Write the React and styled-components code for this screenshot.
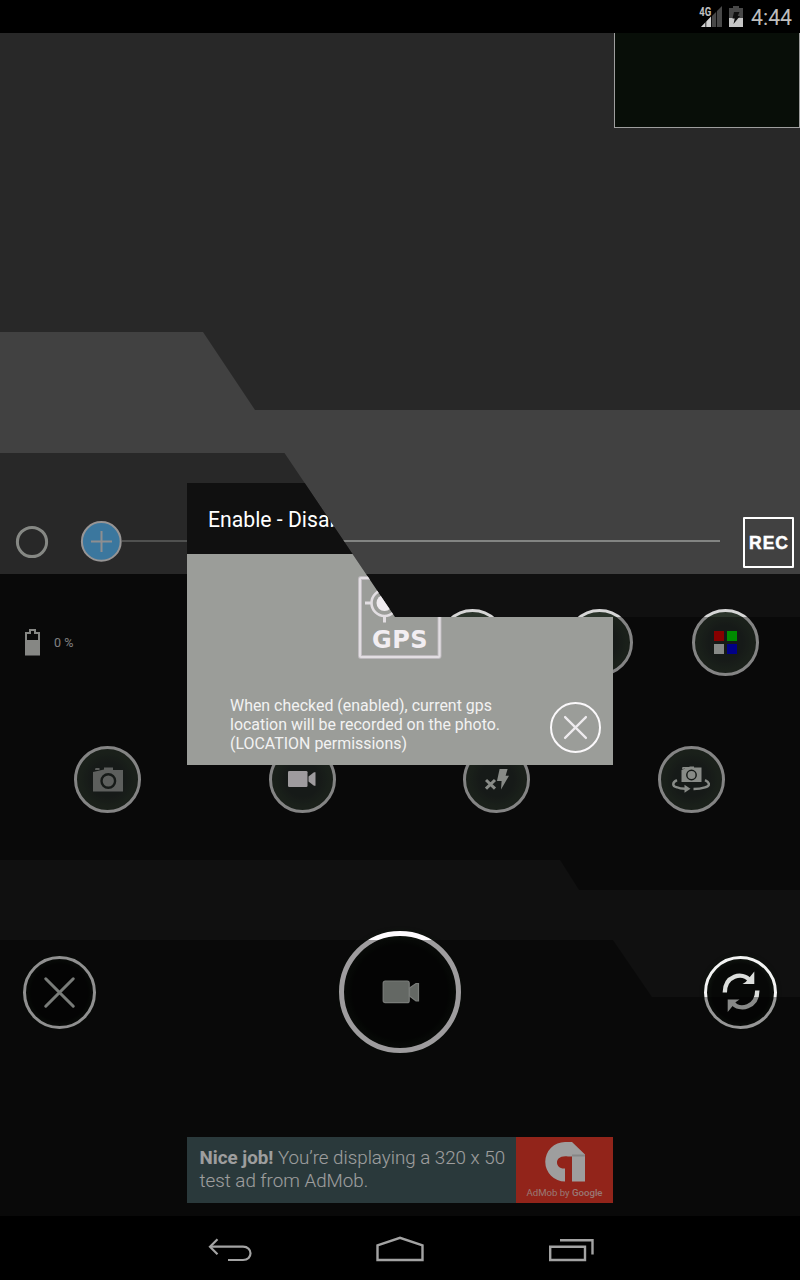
import React from 'react';
import styled, { createGlobalStyle } from 'styled-components';

const GlobalStyle = createGlobalStyle`
  * { box-sizing: border-box; }
  body { margin: 0; background: #000; font-family: Roboto, "Liberation Sans", sans-serif; }
  svg { display: block; flex: none; }
`;

const Screen = styled.div`
  position: relative;
  display: flex;
  flex-direction: column;
  width: 800px;
  height: 1280px;
  overflow: hidden;
  background: #000;
`;

const StatusBar = styled.header`
  display: flex;
  justify-content: flex-end;
  align-items: center;
  height: 33px;
  padding-right: 7px;
  background: #000;
`;

const StatusIcons = styled.div`
  display: flex;
  gap: 7px;
  margin-bottom: 1px;
`;

const Clock = styled.span`
  margin: 2px 0 0 8px;
  width: 42px;
  font-size: 21.3px;
  line-height: 25px;
  color: #bebebe;
  white-space: nowrap;
`;

const Viewfinder = styled.section`
  display: flex;
  flex-direction: column;
  justify-content: space-between;
  height: 541px;
  background: #414141;
`;

const Thumbnail = styled.div`
  align-self: flex-end;
  width: 186px;
  height: 95px;
  border: 1px solid #fff;
  border-top: 0;
  background: #0e180d;
`;

const ZoomRow = styled.div`
  display: flex;
  align-items: center;
  height: 65px;
  padding: 0 6px 0 15px;
`;

const ThumbSlot = styled.div`
  margin: 0 0 0 31px;
`;

const Track = styled.div`
  flex: 1;
  height: 2px;
  margin: 0 23px 1px 0;
  background: #828482;
`;

const RecBadge = styled.div`
  display: flex;
  align-items: center;
  justify-content: center;
  width: 51px;
  height: 51px;
  margin-top: 1px;
  padding-top: 2px;
  border: 2.5px solid #fff;
  border-radius: 1px;
  font: bold 17.5px "Liberation Sans", sans-serif;
  letter-spacing: 1px;
  text-indent: 1px;
  color: #fff;
  -webkit-text-stroke: 0.5px #fff;
`;

const Panel = styled.section`
  height: 642px;
  background: #101010;
`;

const Row = styled.div`
  display: flex;
  align-items: center;
  height: ${(p) => p.$height}px;
  padding: ${(p) => p.$padding};
  gap: ${(p) => p.$gap || 0}px;
  justify-content: ${(p) => (p.$spread ? 'space-between' : 'flex-start')};
`;

const BatteryStatus = styled.div`
  flex: 1;
  display: flex;
  align-items: center;
`;

const BatteryLabel = styled.span`
  margin-left: 14px;
  font-size: 12.5px;
  color: #cfcfcf;
`;

const RoundButton = styled.div`
  display: flex;
  align-items: center;
  justify-content: center;
  flex: none;
  width: 67px;
  height: 67px;
  border: 3px solid #d6d6d6;
  border-radius: 50%;
  background: radial-gradient(circle, #252b28 0 40%, #2a342a 62%);
`;

const DarkButton = styled(RoundButton)`
  width: ${(p) => p.$size}px;
  height: ${(p) => p.$size}px;
  border: ${(p) => p.$stroke}px solid ${(p) => p.$color || '#f4f4f4'};
  background: radial-gradient(circle, #070807 0 60%, #0d110d 70%);
  box-shadow: 0 0 4px #0d160d;
`;

const Ad = styled.div`
  display: flex;
  width: 426px;
  height: 66px;
  margin: 0 auto;
  background: #445d5f;
`;

const AdText = styled.p`
  flex: 1;
  margin: 0;
  padding: 10px 0 0 12.5px;
  font-size: 18.75px;
  font-weight: 300;
  line-height: 22.5px;
  color: #fff;
  white-space: nowrap;
  b { font-weight: 700; }
`;

const AdLogo = styled.div`
  display: flex;
  flex: none;
  flex-direction: column;
  align-items: center;
  width: 97px;
  padding-top: 5px;
  background: #ec3a2b;
  font-size: 9.6px;
  line-height: 12px;
  color: #f6c2bc;
  span { margin-top: 5px; white-space: nowrap; }
  b { font-weight: 500; }
`;

const NavBar = styled.nav`
  display: flex;
  align-items: center;
  justify-content: space-between;
  height: 64px;
  padding: 3px 204px 0 206px;
  background: #000;
`;

const Overlay = styled.div`
  position: absolute;
  top: 33px;
  left: 0;
  width: 800px;
  height: 1183px;
  padding-top: 450px;
  background: rgba(0, 0, 0, 0.38);
  clip-path: path(evenodd, "M0 0H800V1183H0Z M0 299H203L255 377H800V584H395L284.5 420H0Z M0 827H560L579 857H800V964H652L613 907H0Z");
`;

const Dialog = styled.div`
  width: 426px;
  height: 282px;
  margin: 0 auto;
`;

const DialogTitle = styled.h1`
  height: 71px;
  margin: 0;
  padding-left: 21px;
  background: #101010;
  font-size: 21.2px;
  font-weight: 400;
  line-height: 73px;
  color: #fff;
`;

const DialogBody = styled.div`
  display: flex;
  flex-direction: column;
  align-items: center;
  justify-content: space-between;
  height: 211px;
  padding: 22px 12px 12px 43px;
  background: #9b9d99;
`;

const GpsSlot = styled.div`
  width: 84px;
  margin-right: 32px;
`;

const DialogFooter = styled.div`
  display: flex;
  align-items: flex-end;
  justify-content: space-between;
  width: 100%;
`;

const Message = styled.p`
  margin: 0;
  font-size: 15.95px;
  line-height: 19px;
  color: #f2f2f2;
  white-space: nowrap;
`;

const CloseCircle = styled.div`
  display: flex;
  align-items: center;
  justify-content: center;
  width: 51px;
  height: 51px;
  border: 2.5px solid #fbf9fb;
  border-radius: 50%;
`;

const Cross = ({ size, color, width }) => (
  <svg width={size} height={size} viewBox="0 0 24 24" stroke={color} strokeWidth={width} strokeLinecap="round">
    <path d="M2 2L22 22M22 2L2 22" />
  </svg>
);

const SignalIcon = () => (
  <svg width="26" height="23" viewBox="-3 -1 26 23">
    <path d="M23 0V21H2Z" fill="#484848" />
    <path d="M12 10.5V21H2Z" fill="#d0d0d0" />
    <path d="M6.8 14V21M12.5 9V21M17.5 4V21" stroke="#000" strokeWidth="0.8" />
    <text x="0.2" y="10.2" fontSize="12" fontWeight="700" fill="#c0c0c0" stroke="#000" strokeWidth="1" paintOrder="stroke" textLength="12" lengthAdjust="spacingAndGlyphs">4G</text>
  </svg>
);

const StatusBattery = () => (
  <svg width="14" height="22" viewBox="0 -1 14 22">
    <path d="M4 0H10V2H14V12H0V2H4Z" fill="#484848" />
    <path d="M0 12H14V21H0Z" fill="#c6c6c6" />
    <path d="M5 6H10.5L8.7 10H11L4.5 18L5.7 12.5H3.5Z" fill="#101010" />
  </svg>
);

const RingIcon = () => (
  <svg width="34" height="34" viewBox="0 0 34 34">
    <circle cx="17" cy="17" r="14.6" fill="none" stroke="#d8dcd6" strokeWidth="3" />
  </svg>
);

const PlusThumb = () => (
  <svg width="42" height="42" viewBox="0 0 42 42">
    <circle cx="21.3" cy="20.4" r="19.4" fill="#5fc1ff" stroke="#f4f0f0" strokeWidth="2" />
    <path d="M11 20.4H32M21.5 10V31" stroke="#e6e6ea" strokeWidth="2" />
  </svg>
);

const BatteryIcon = () => (
  <svg width="15" height="27" viewBox="0 0 15 27">
    <path fillRule="evenodd" d="M4 0H11V3H15V27H0V3H4ZM6 2V5H2V11H13V5H9V2Z" fill="#d8dad6" />
    <path d="M0 26H15V27H0Z" fill="#777" />
  </svg>
);

const SwatchIcon = () => (
  <svg width="23" height="23" viewBox="0 0 23 23">
    <path d="M0 0H10V10H0Z" fill="#da0000" />
    <path d="M13 0H23V10H13Z" fill="#00e000" />
    <path d="M0 13H10V23H0Z" fill="#dadeda" />
    <path d="M13 13H23V23H13Z" fill="#0000da" />
  </svg>
);

const CameraIcon = () => (
  <svg width="30" height="25" viewBox="0 0 30 25">
    <path d="M11 0.5H20V3H30V24.5H0V5L11 2.5Z" fill="#969a96" />
    <path d="M2.5 1H6.5V3H2Z" fill="#969a96" />
    <circle cx="15.3" cy="14" r="6.8" fill="none" stroke="#252b27" strokeWidth="2.4" />
  </svg>
);

const VideoIcon = () => (
  <svg width="28" height="19" viewBox="0 0 28 19">
    <rect x="0" y="1" width="19.5" height="16" rx="1.3" fill="#fffaff" />
    <path d="M20.5 6.5L26 2.2H27.5V15.8H26L20.5 11.5Z" fill="#fffaff" />
  </svg>
);

const FlashOffIcon = () => (
  <svg width="24" height="21" viewBox="0 0 24 21">
    <path d="M14.6 0H22.6L20.6 6.7H24L16 20.5L16.6 12H12Z" fill="#dbe0da" />
    <path d="M1 11L10 19.7M10 11L1 19.7" stroke="#dbe0da" strokeWidth="3" />
  </svg>
);

const SwitchCameraIcon = () => (
  <svg width="38" height="27" viewBox="0 0 38 27">
    <path d="M13 1H17L18 0.5H22V1.5H29.5V16H9.5V4L13 2.5Z" fill="#dbe0da" />
    <path d="M10.5 1H13V2.5L10 3.2Z" fill="#dbe0da" />
    <circle cx="19.5" cy="9" r="4.7" fill="none" stroke="#252b27" strokeWidth="1.5" />
    <path d="M5 14.2C0 16.5 0 20 5 21.3Q8 22.8 13 22.8M33 14.2C38 16.5 38.5 20 33 21.3Q28 23 21.5 23" fill="none" stroke="#dbe0da" strokeWidth="2.4" />
    <path d="M12.5 18.8L18.5 22.8L12.5 26.8Z" fill="#dbe0da" />
  </svg>
);

const RecordIcon = () => (
  <svg width="40" height="26" viewBox="0 0 40 26">
    <rect x="3.2" y="2.2" width="26" height="21.5" rx="2" fill="#a2a8a2" stroke="#c4c8c4" strokeWidth="1.2" />
    <path d="M29.5 9L36 4.5H38.5V22H36L29.5 17Z" fill="#a2a8a2" stroke="#c4c8c4" strokeWidth="1.2" />
  </svg>
);

const SyncIcon = () => (
  <svg width="40" height="42" viewBox="0 0 40 42">
    <g fill="none" stroke="#dcdedc" strokeWidth="4.4">
      <path d="M3.8 21.5C3.8 5 21 0 29 9.5" />
      <path d="M36.3 19.5C36.3 36 19 41 11 31.5" />
    </g>
    <path d="M33.3 0.5V13H21.5Q25.5 11 28 7Z" fill="#dcdedc" />
    <path d="M6.7 41V28.5H18.5Q14.500 30.5 12 34.5Z" fill="#dcdedc" />
  </svg>
);

const GpsIcon = () => (
  <svg width="84" height="84" viewBox="0 0 84 84">
    <rect x="2" y="2" width="79.5" height="79" fill="none" stroke="#bdb9bd" strokeWidth="4" rx="1" />
    <rect x="2" y="2" width="79.5" height="79" fill="none" stroke="#e2dee2" strokeWidth="2.2" rx="1" />
    <g stroke="#e2dee2" fill="none">
      <circle cx="26.5" cy="27" r="13" strokeWidth="2.6" />
      <path d="M26.5 10V14M26.5 40V46.500M7 27H13M40 27H46" strokeWidth="3" />
    </g>
    <circle cx="26.5" cy="27" r="8" fill="#f0ecf0" />
    <text x="14" y="72" fontFamily="DejaVu Sans" fontWeight="700" fontSize="24" fill="#f2eef2" textLength="55.5">GPS</text>
  </svg>
);

const AdMobIcon = () => (
  <svg width="40" height="40" viewBox="0 0 40 40">
    <path d="M20 0H27L40 12.5V39.5H27V14.5H23C15 13.5 12 17 12 20.5C12 24 15 27 20 26.5V39.5A19.7 19.7 0 0 1 20 0Z" fill="#fff" />
    <path d="M27 12.5H40V14.5H27Z" fill="#d8d8d8" />
  </svg>
);

const BackIcon = () => (
  <svg width="48" height="28" viewBox="0 0 48 28" fill="none" stroke="#a3a3a3" strokeWidth="2.2">
    <path d="M4 10.7H37C47 10.7 47 24 37 24H22" />
    <path d="M11.5 3.2L4 10.7L11.5 18.2" />
  </svg>
);

const HomeIcon = () => (
  <svg width="50" height="28" viewBox="0 0 50 28" fill="none" stroke="#a3a3a3" strokeWidth="2.4">
    <path d="M1.500 9.3L24 1.8L46.500 9.3V24H1.500Z" />
  </svg>
);

const RecentsIcon = () => (
  <svg width="48" height="28" viewBox="0 0 48 28" fill="none" stroke="#a3a3a3" strokeWidth="2.4">
    <path d="M2.2 10.7H37V24H2.2Z M12 4.2H44.500V18.5" />
  </svg>
);

export default function App() {
  return (
    <Screen>
      <GlobalStyle />
      <StatusBar>
        <StatusIcons>
          <SignalIcon />
          <StatusBattery />
        </StatusIcons>
        <Clock>4:44</Clock>
      </StatusBar>

      <Viewfinder>
        <Thumbnail />
        <ZoomRow>
          <RingIcon />
          <ThumbSlot><PlusThumb /></ThumbSlot>
          <Track />
          <RecBadge>REC</RecBadge>
        </ZoomRow>
      </Viewfinder>

      <Panel>
        <Row $height={136} $padding="0 41px 0 25px" $gap={59.5}>
          <BatteryStatus>
            <BatteryIcon />
            <BatteryLabel>0 %</BatteryLabel>
          </BatteryStatus>
          <RoundButton />
          <RoundButton />
          <RoundButton><SwatchIcon /></RoundButton>
        </Row>
        <Row $height={138} $padding="0 75px 0 74px" $gap={127.6}>
          <RoundButton><CameraIcon /></RoundButton>
          <RoundButton><VideoIcon /></RoundButton>
          <RoundButton><FlashOffIcon /></RoundButton>
          <RoundButton><SwitchCameraIcon /></RoundButton>
        </Row>
        <Row $height={288} $padding="0 23px" $spread>
          <DarkButton $size={73} $stroke={3} $color="#e8e8e8"><Cross size={33} color="#c4c8c4" width={2.2} /></DarkButton>
          <DarkButton $size={122} $stroke={5} $color="#fffcff"><RecordIcon /></DarkButton>
          <DarkButton $size={73} $stroke={3}><SyncIcon /></DarkButton>
        </Row>
        <AdSlot>
          <Ad>
            <AdText><b>Nice job!</b> You’re displaying a 320 x 50<br />test ad from AdMob.</AdText>
            <AdLogo>
              <AdMobIcon />
              <span>AdMob by <b>Google</b></span>
            </AdLogo>
          </Ad>
        </AdSlot>
      </Panel>

      <NavBar>
        <BackIcon />
        <HomeIcon />
        <RecentsIcon />
      </NavBar>

      <Overlay>
        <Dialog>
          <DialogTitle>Enable - Disable</DialogTitle>
          <DialogBody>
            <GpsSlot><GpsIcon /></GpsSlot>
            <DialogFooter>
              <Message>
                When checked (enabled), current gps<br />
                location will be recorded on the photo.<br />
                (LOCATION permissions)
              </Message>
              <CloseCircle><Cross size={25} color="#eeebee" width={2.2} /></CloseCircle>
            </DialogFooter>
          </DialogBody>
        </Dialog>
      </Overlay>
    </Screen>
  );
}

const AdSlot = styled.div`
  padding-top: 1px;
`;
